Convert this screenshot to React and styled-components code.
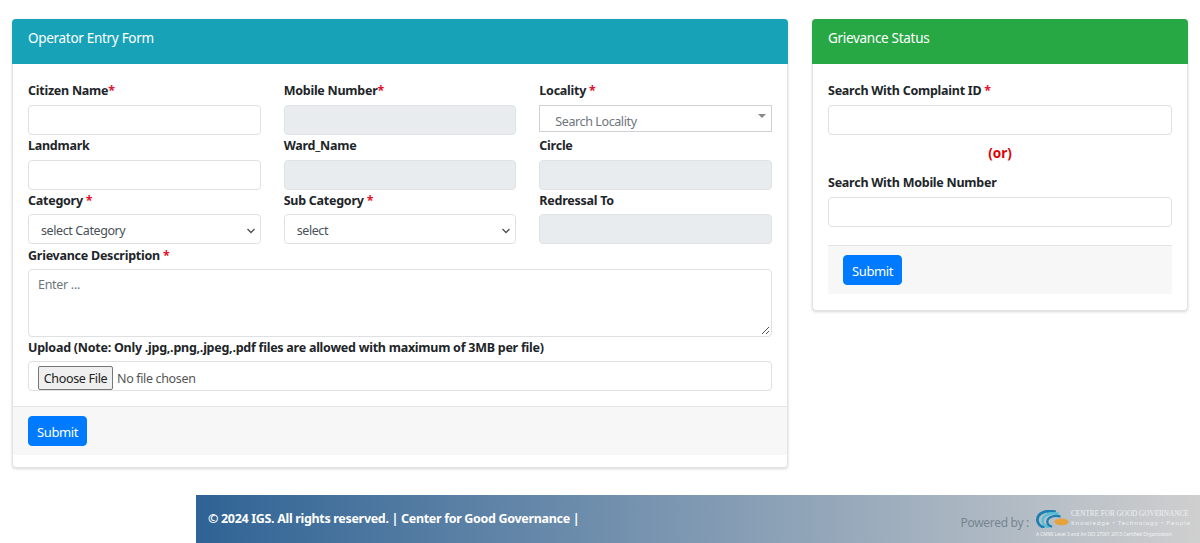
import React from "react";
import styled, { createGlobalStyle } from "styled-components";

const Global = createGlobalStyle`
  * { box-sizing: border-box; }
  html, body { margin: 0; padding: 0; background: #fff; }
  body {
    font-family: "Noto Sans", "Open Sans", sans-serif;
    font-size: 13.5px;
    color: #212529;
    overflow: hidden;
  }
`;

const Page = styled.div`
  width: 1200px;
  height: 543px;
  display: flex;
  flex-direction: column;
`;
const Columns = styled.div`
  display: grid;
  grid-template-columns: 776px 376px;
  column-gap: 24px;
  align-items: start;
  padding: 19px 12px 0;
`;
const Card = styled.section`
  background: #fff;
  border: 1px solid #e1e3e5;
  border-radius: 4px;
  box-shadow: 0 1px 3px rgba(0, 0, 0, 0.16);
  padding-bottom: ${(p) => p.$bottom}px;
`;
const CardHeader = styled.header`
  height: 45px;
  margin: -1px -1px 0;
  padding: 9px 16px 0;
  border-radius: 4px 4px 0 0;
  background: ${(p) => p.$bg};
  color: #fff;
  font-size: 13.5px;
  letter-spacing: -0.3px;
  line-height: 20px;
`;
const CardBody = styled.div`
  padding: 16px 15px 0;
`;
const FormGrid = styled.div`
  display: grid;
  grid-template-columns: repeat(3, 1fr);
  column-gap: 23px;
`;
const Field = styled.div`
  height: 55px;
`;
const WideField = styled.div`
  margin-top: ${(p) => p.$top || 0}px;
`;
const Label = styled.label`
  display: block;
  height: 16px;
  margin-top: 2px;
  margin-bottom: ${(p) => (p.$tight ? 6 : 7)}px;
  font-weight: 700;
  font-size: 12.5px;
  letter-spacing: -0.25px;
  line-height: 18px;
  color: #212529;
`;
const Star = styled.span`
  color: #e8112d;
`;
const Input = styled.div`
  height: 30px;
  border: 1px solid ${(p) => (p.$disabled ? "#e0e3e6" : "#dee1e4")};
  border-radius: 4px;
  background: ${(p) => (p.$disabled ? "#e9ecef" : "#fff")};
`;
const Select = styled.div`
  height: 30px;
  border: 1px solid #dee1e4;
  border-radius: 4px;
  background: #fff;
  display: flex;
  align-items: center;
  justify-content: space-between;
  padding: 3px 4px 0 12px;
  font-size: 12.5px;
  letter-spacing: -0.4px;
  color: #495057;
`;
const LocalityBox = styled.div`
  position: relative;
  height: 27px;
  border: 1px solid #ced1d4;
  background: #fff;
  padding: 7px 0 0 15px;
  font-size: 12.5px;
  letter-spacing: -0.4px;
  line-height: 18px;
  color: #6e757c;
`;
const Caret = styled.span`
  position: absolute;
  top: 8px;
  right: 5px;
  border-left: 4px solid transparent;
  border-right: 4px solid transparent;
  border-top: 4px solid #888;
`;
const TextArea = styled.div`
  height: 68px;
  position: relative;
  border: 1px solid #dee1e4;
  border-radius: 4px;
  padding: 6px 9px;
  font-size: 12.5px;
  letter-spacing: -0.3px;
  line-height: 18px;
  color: #6c757d;
`;
const Resize = styled.svg`
  position: absolute;
  right: 1px;
  bottom: 1px;
`;
const FileBox = styled.div`
  height: 30px;
  border: 1px solid #dee1e4;
  border-radius: 4px;
  display: flex;
  align-items: center;
  padding: 4px 0 0 9px;
  font-size: 12.5px;
  letter-spacing: -0.35px;
  color: #555;
`;
const FileButton = styled.span`
  height: 24px;
  width: 75px;
  margin-right: 4px;
  background: #efefef;
  border: 1px solid #767676;
  border-radius: 2px;
  display: flex;
  align-items: center;
  justify-content: center;
  color: #222;
  letter-spacing: -0.3px;
`;
const FormActions = styled.div`
  margin-top: ${(p) => p.$top}px;
  height: 49px;
  background: #f7f7f7;
  border-top: 1px solid #e4e4e4;
  padding: 9px ${(p) => p.$pad}px 0;
`;
const Button = styled.button`
  display: block;
  width: 59px;
  height: 30px;
  padding: 2px 0 0;
  background: #007bff;
  border: 1px solid #007bff;
  border-radius: 4px;
  color: #fff;
  font-family: inherit;
  font-size: 13px;
  letter-spacing: -0.4px;
`;
const OrText = styled.div`
  height: 37px;
  padding-top: 8px;
  text-align: center;
  color: #e00000;
  font-weight: 700;
  font-size: 13.5px;
  line-height: 20px;
`;
const Footer = styled.footer`
  margin: 27px 0 0 196px;
  height: 48px;
  display: flex;
  align-items: center;
  justify-content: space-between;
  padding: 0 13px 0 12px;
  background: linear-gradient(to right, #2f6395, #cfcfcf);
  color: #fff;
  font-weight: 700;
  font-size: 12.5px;
  letter-spacing: -0.32px;
`;
const Copyright = styled.span`
  margin-bottom: 2px;
`;
const Powered = styled.div`
  display: flex;
  align-items: center;
  padding-top: 9px;
  color: #78858f;
  font-weight: 400;
  font-size: 12px;
  letter-spacing: -0.3px;
`;
const PoweredLabel = styled.span`
  padding-bottom: 3px;
`;
const Logo = styled.div`
  display: flex;
  flex-direction: column;
  width: 151px;
  margin-left: 7px;
  letter-spacing: 0;
`;
const LogoTop = styled.div`
  display: flex;
  align-items: center;
  height: 18px;
`;
const SwirlMark = styled.svg`
  flex: none;
`;
const LogoLines = styled.div`
  margin-left: 2px;
  color: #eef1f3;
  white-space: nowrap;
`;
const LogoTitle = styled.div`
  font-family: "Liberation Serif", serif;
  font-size: 7.2px;
  line-height: 9px;
`;
const LogoTag = styled.div`
  font-size: 6px;
  line-height: 9px;
  letter-spacing: 0.85px;
`;
const LogoNote = styled.div`
  margin-top: 2px;
  font-size: 4.7px;
  line-height: 8px;
  color: #f2f4f5;
  white-space: nowrap;
`;

const Req = ({ spaced }) => (
  <Star>{spaced ? " *" : "*"}</Star>
);

function Chevron() {
  return (
    <svg width="10" height="7" viewBox="0 0 10 7">
      <path d="M1.5 2 L5 5.5 L8.5 2" fill="none" stroke="#4a5056" strokeWidth="1.3" />
    </svg>
  );
}

function Swirl() {
  return (
    <SwirlMark width="33" height="18" viewBox="0 0 35 18">
      <path d="M21 1.5 C10 -1 1.5 3 1.5 10 C1.5 14 5 17 9 18" fill="none" stroke="#1c7fb2" strokeWidth="3" />
      <path d="M24 3.5 C15 1.5 7 5 7 11 C7 14 10 17 14 18" fill="none" stroke="#52bfd6" strokeWidth="2.6" />
      <path d="M26 6.5 C19 4.5 12 7 12 12 C12 14.5 14 16.5 17 17" fill="none" stroke="#1c7fb2" strokeWidth="2.4" />
      <ellipse cx="27" cy="12" rx="7.5" ry="3.6" fill="#e8a23a" />
    </SwirlMark>
  );
}

export default function App() {
  return (
    <Page>
      <Global />
      <Columns>
        <Card $bottom={12}>
          <CardHeader $bg="#17a2b8">Operator Entry Form</CardHeader>
          <CardBody>
            <FormGrid>
              <Field>
                <Label>Citizen Name<Req /></Label>
                <Input />
              </Field>
              <Field>
                <Label>Mobile Number<Req /></Label>
                <Input $disabled />
              </Field>
              <Field>
                <Label>Locality<Req spaced /></Label>
                <LocalityBox>
                  Search Locality
                  <Caret />
                </LocalityBox>
              </Field>
              <Field>
                <Label>Landmark</Label>
                <Input />
              </Field>
              <Field>
                <Label>Ward_Name</Label>
                <Input $disabled />
              </Field>
              <Field>
                <Label>Circle</Label>
                <Input $disabled />
              </Field>
              <Field>
                <Label $tight>Category<Req spaced /></Label>
                <Select>select Category<Chevron /></Select>
              </Field>
              <Field>
                <Label $tight>Sub Category<Req spaced /></Label>
                <Select>select<Chevron /></Select>
              </Field>
              <Field>
                <Label $tight>Redressal To</Label>
                <Input $disabled />
              </Field>
            </FormGrid>
            <WideField>
              <Label $tight>Grievance Description<Req spaced /></Label>
              <TextArea>
                Enter ...
                <Resize width="10" height="10" viewBox="0 0 10 10">
                  <path d="M9 2 L2 9 M9 6 L6 9" stroke="#555" strokeWidth="1" />
                </Resize>
              </TextArea>
            </WideField>
            <WideField $top={1}>
              <Label $tight>Upload (Note: Only .jpg,.png,.jpeg,.pdf files are allowed with maximum of 3MB per file)</Label>
              <FileBox>
                <FileButton>Choose File</FileButton>
                No file chosen
              </FileBox>
            </WideField>
          </CardBody>
          <FormActions $top={15} $pad={15}>
            <Button>Submit</Button>
          </FormActions>
        </Card>
        <Card $bottom={16}>
          <CardHeader $bg="#28a745">Grievance Status</CardHeader>
          <CardBody>
            <Label>Search With Complaint ID<Req spaced /></Label>
            <Input />
            <OrText>(or)</OrText>
            <Label>Search With Mobile Number</Label>
            <Input />
            <FormActions $top={18} $pad={15}>
              <Button>Submit</Button>
            </FormActions>
          </CardBody>
        </Card>
      </Columns>
      <Footer>
        <Copyright>© 2024 IGS. All rights reserved. | Center for Good Governance |</Copyright>
        <Powered>
          <PoweredLabel>Powered by :</PoweredLabel>
          <Logo>
            <LogoTop>
              <Swirl />
              <LogoLines>
                <LogoTitle>CENTRE FOR GOOD GOVERNANCE</LogoTitle>
                <LogoTag>Knowledge • Technology • People</LogoTag>
              </LogoLines>
            </LogoTop>
            <LogoNote>A CMMI Level 3 and An ISO 27001 2013 Certified Organization</LogoNote>
          </Logo>
        </Powered>
      </Footer>
    </Page>
  );
}
